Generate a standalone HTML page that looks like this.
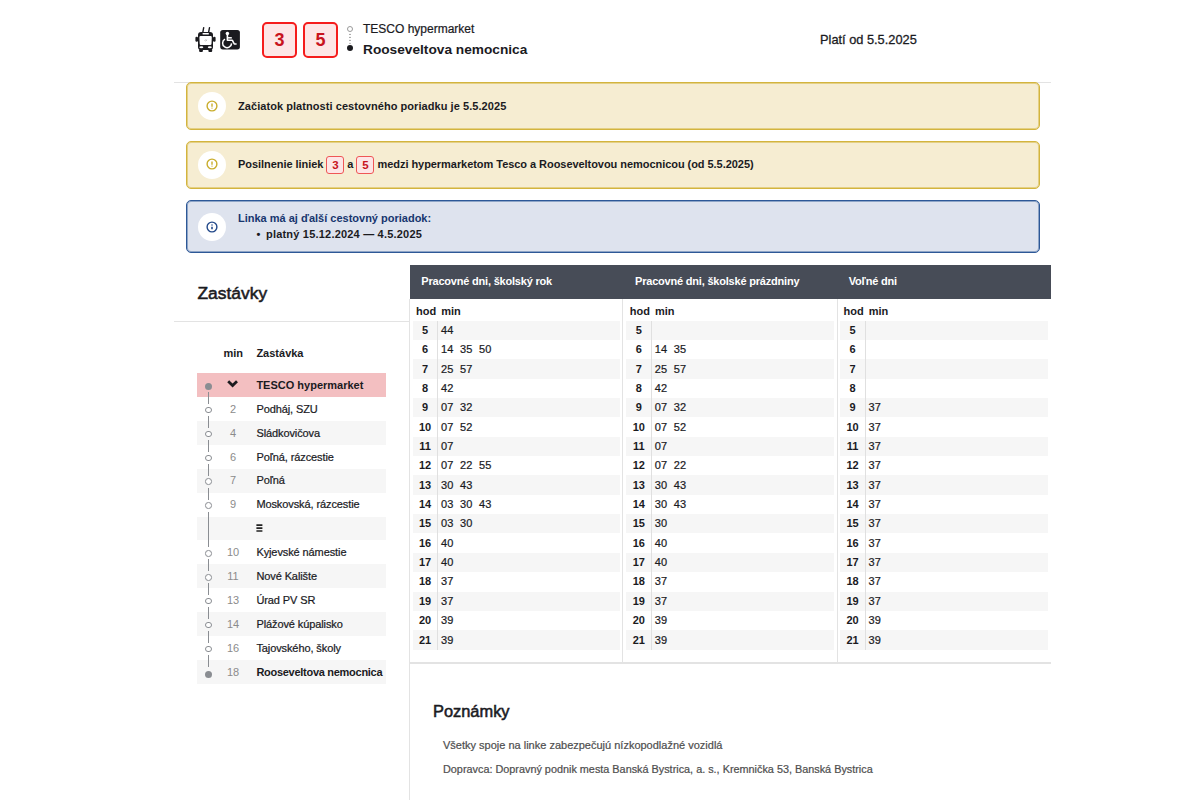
<!DOCTYPE html>
<html><head><meta charset="utf-8">
<style>
*{margin:0;padding:0;box-sizing:border-box}
html,body{width:1200px;height:800px;overflow:hidden;background:#fff}
body{position:relative;font-family:"Liberation Sans",sans-serif;color:#1b1b1f}
.a{position:absolute;white-space:nowrap;line-height:1}
.b{font-weight:bold}
.m{-webkit-text-stroke:0.22px currentColor}
.hl{position:absolute;background:#e3e3e3}
.badge{position:absolute;top:22px;width:35px;height:35.5px;border:2px solid #f51c1c;border-radius:5px;background:#fde6e6;color:#c8141e;font-weight:bold;font-size:18px;line-height:32.5px;text-align:center}
.note{position:absolute;left:186px;width:854px;border:1px solid #d3b43e;border-radius:5px;background:#f6edd2;box-shadow:inset 0 0 0 1px rgba(214,184,70,.55)}
.note.blue{border-color:#2d5897;background:#dee3ee;box-shadow:inset 0 0 0 1px rgba(45,88,151,.45)}
.circ{position:absolute;left:198px;width:28px;height:28px;border-radius:50%;background:#fff}
.ib{display:inline-block;width:18px;height:18px;border:1px solid #ef5656;border-radius:3px;background:#fde6e6;color:#c8141e;text-align:center;line-height:16px;vertical-align:top;margin-top:-2.6px;font-size:11.5px}
</style></head>
<body>
<!-- header icons -->
<svg class="a" style="left:192px;top:24px" width="28" height="30" viewBox="0 0 28 30">
  <path d="M11.7 3.6 L10.8 8.4 M17.5 3.6 L16.6 8.4" stroke="#1b1b1f" stroke-width="1.4" stroke-linecap="round"/>
  <rect x="6" y="8" width="15" height="18" rx="3" fill="#1b1b1f"/>
  <rect x="3.4" y="12.7" width="2.6" height="5" rx="1.2" fill="#1b1b1f"/>
  <rect x="21" y="12.7" width="2.6" height="5" rx="1.2" fill="#1b1b1f"/>
  <path d="M7.4 13.2 Q7.4 12 8.6 12 H18.6 Q19.8 12 19.8 13.2 L19.5 19.8 Q19.5 21 18.3 21 H8.9 Q7.7 21 7.7 19.8 Z" fill="#fff"/>
  <rect x="10.5" y="9.1" width="6.4" height="1.3" rx="0.4" fill="#fff"/>
  <ellipse cx="9.3" cy="23.2" rx="2" ry="1.05" fill="#fff"/>
  <ellipse cx="17.8" cy="23.2" rx="2" ry="1.05" fill="#fff"/>
  <rect x="7.1" y="25" width="3.8" height="3" rx="1" fill="#1b1b1f"/>
  <rect x="16.4" y="25" width="3.8" height="3" rx="1" fill="#1b1b1f"/>
  <path d="M12.5 17 L14.2 15.2 M13.6 17.3 L15.1 15.9" stroke="#9a9a9a" stroke-width="0.6"/>
</svg>
<svg class="a" style="left:220px;top:30px" width="20" height="20" viewBox="0 0 20 20">
  <rect x="0.2" y="0" width="19.7" height="19.4" rx="2.6" fill="#1b1b1f"/>
  <circle cx="7.4" cy="3.4" r="1.75" fill="#fff"/>
  <path d="M7.4 4.8 V10.3 H12.4 L14.3 14 H16.6" stroke="#fff" stroke-width="1.6" fill="none" stroke-linejoin="round"/>
  <path d="M7.4 7.8 H11.8" stroke="#fff" stroke-width="1.5"/>
  <path d="M5 9.2 A4.5 4.5 0 1 0 11.6 13.4" stroke="#fff" stroke-width="1.5" fill="none"/>
</svg>
<div class="badge" style="left:262px">3</div>
<div class="badge" style="left:303px">5</div>
<!-- route dots -->
<div class="a" style="left:347px;top:26px;width:6px;height:6px;border:1px solid #9a9a9a;border-radius:50%"></div>
<svg class="a" style="left:347px;top:32px" width="6" height="14" viewBox="0 0 6 14"><circle cx="3" cy="2.4" r="0.65" fill="#6f6f6f"/><circle cx="3" cy="5.4" r="0.65" fill="#6f6f6f"/><circle cx="3" cy="8.4" r="0.65" fill="#6f6f6f"/><circle cx="3" cy="11.4" r="0.65" fill="#8f8f8f"/></svg>
<div class="a" style="left:347px;top:45.2px;width:6px;height:6px;background:#1b1b1f;border-radius:50%"></div>
<div class="a m" style="left:363px;top:22.8px;font-size:12px">TESCO hypermarket</div>
<div class="a b" style="left:363px;top:42.7px;font-size:13.7px">Rooseveltova nemocnica</div>
<div class="a" style="left:820px;top:33.5px;font-size:12.8px;-webkit-text-stroke:0.3px #1b1b1f">Platí od 5.5.2025</div>
<div class="hl" style="left:174px;top:81.5px;width:877px;height:1.5px"></div>

<!-- notices -->
<div class="note" style="top:82px;height:48px"></div>
<div class="circ" style="top:92px"></div>
<svg class="a" style="left:206.4px;top:99.6px" width="12" height="12" viewBox="0 0 12 12"><circle cx="6" cy="6" r="4.9" stroke="#c9ad2c" stroke-width="1.4" fill="none"/><path d="M6 3.6 V6.7" stroke="#c9ad2c" stroke-width="1.4"/><circle cx="6" cy="8.1" r="0.7" fill="#c9ad2c"/></svg>
<div class="a b" style="left:238px;top:101.2px;font-size:11px;letter-spacing:0.06px">Začiatok platnosti cestovného poriadku je 5.5.2025</div>

<div class="note" style="top:141px;height:47.8px"></div>
<div class="circ" style="top:151px"></div>
<svg class="a" style="left:206.4px;top:158.4px" width="12" height="12" viewBox="0 0 12 12"><circle cx="6" cy="6" r="4.9" stroke="#c9ad2c" stroke-width="1.4" fill="none"/><path d="M6 3.6 V6.7" stroke="#c9ad2c" stroke-width="1.4"/><circle cx="6" cy="8.1" r="0.7" fill="#c9ad2c"/></svg>
<div class="a b" style="left:238px;top:158.5px;font-size:11px;letter-spacing:-0.05px">Posilnenie liniek <span class="ib">3</span> a <span class="ib">5</span> medzi hypermarketom Tesco a Rooseveltovou nemocnicou (od 5.5.2025)</div>

<div class="note blue" style="top:200px;height:52.8px"></div>
<div class="circ" style="top:212.5px"></div>
<svg class="a" style="left:206px;top:220.5px" width="12" height="12" viewBox="0 0 12 12"><circle cx="6" cy="6" r="4.9" stroke="#23498a" stroke-width="1.4" fill="none"/><circle cx="6" cy="4.1" r="0.75" fill="#23498a"/><path d="M6 5.7 V8.3" stroke="#23498a" stroke-width="1.6"/></svg>
<div class="a b" style="left:238px;top:213.2px;font-size:11px;color:#17366e">Linka má aj ďalší cestovný poriadok:</div>
<div class="a b" style="left:256.5px;top:229.4px;font-size:11px">•</div><div class="a b" style="left:266px;top:229.4px;font-size:11px;letter-spacing:0.2px">platný 15.12.2024 — 4.5.2025</div>

<!-- stops -->
<div class="a" style="left:197.5px;top:284.6px;font-size:17.4px;-webkit-text-stroke:0.55px #1b1b1f">Zastávky</div>
<div class="hl" style="left:174px;top:320.5px;width:236px;height:1.5px"></div>
<div class="a b" style="left:223.5px;top:347.5px;font-size:11px">min</div>
<div class="a b" style="left:256.4px;top:347.5px;font-size:11px">Zastávka</div>
<div class="a" style="left:197px;top:373.25px;width:189px;height:23.88px;background:#f3bfc1"></div>
<svg class="a" style="left:226px;top:379.19px" width="13" height="9" viewBox="0 0 13 9"><path d="M2.2 2.3 L6.6 6.5 L11 2.3" stroke="#1b1b1f" stroke-width="2.8" fill="none"/></svg>
<div class="a b" style="left:256.4px;top:379.95px;font-size:11px">TESCO hypermarket</div>
<div class="a" style="left:205px;top:382.69px;width:7px;height:7px;border-radius:50%;background:#8a8d92"></div>
<div class="a" style="left:197px;top:397.13px;width:189px;height:23.88px;background:#fff"></div>
<div class="a" style="left:220px;width:26px;text-align:center;top:403.83px;font-size:11px;color:#8b8b8b">2</div>
<div class="a m" style="left:256.4px;top:403.83px;font-size:11px;letter-spacing:-0.1px;">Podháj, SZU</div>
<div class="a" style="left:205.2px;top:406.77px;width:6.6px;height:6.6px;border-radius:50%;border:1.3px solid #8a8d92;background:#fff"></div>
<div class="a" style="left:197px;top:421.01px;width:189px;height:23.88px;background:#f6f6f6"></div>
<div class="a" style="left:220px;width:26px;text-align:center;top:427.71px;font-size:11px;color:#8b8b8b">4</div>
<div class="a m" style="left:256.4px;top:427.71px;font-size:11px;letter-spacing:-0.1px;">Sládkovičova</div>
<div class="a" style="left:205.2px;top:430.65px;width:6.6px;height:6.6px;border-radius:50%;border:1.3px solid #8a8d92;background:#fff"></div>
<div class="a" style="left:197px;top:444.89px;width:189px;height:23.88px;background:#fff"></div>
<div class="a" style="left:220px;width:26px;text-align:center;top:451.59px;font-size:11px;color:#8b8b8b">6</div>
<div class="a m" style="left:256.4px;top:451.59px;font-size:11px;letter-spacing:-0.1px;">Poľná, rázcestie</div>
<div class="a" style="left:205.2px;top:454.53px;width:6.6px;height:6.6px;border-radius:50%;border:1.3px solid #8a8d92;background:#fff"></div>
<div class="a" style="left:197px;top:468.77px;width:189px;height:23.88px;background:#f6f6f6"></div>
<div class="a" style="left:220px;width:26px;text-align:center;top:475.47px;font-size:11px;color:#8b8b8b">7</div>
<div class="a m" style="left:256.4px;top:475.47px;font-size:11px;letter-spacing:-0.1px;">Poľná</div>
<div class="a" style="left:205.2px;top:478.41px;width:6.6px;height:6.6px;border-radius:50%;border:1.3px solid #8a8d92;background:#fff"></div>
<div class="a" style="left:197px;top:492.65px;width:189px;height:23.88px;background:#fff"></div>
<div class="a" style="left:220px;width:26px;text-align:center;top:499.35px;font-size:11px;color:#8b8b8b">9</div>
<div class="a m" style="left:256.4px;top:499.35px;font-size:11px;letter-spacing:-0.1px;">Moskovská, rázcestie</div>
<div class="a" style="left:205.2px;top:502.29px;width:6.6px;height:6.6px;border-radius:50%;border:1.3px solid #8a8d92;background:#fff"></div>
<div class="a" style="left:197px;top:516.53px;width:189px;height:23.88px;background:#f6f6f6"></div>
<svg class="a" style="left:255px;top:522.73px" width="9" height="10" viewBox="0 0 9 10"><path d="M1.4 2.2 H7.4 M1.4 5.1 H7.4 M1.4 8 H7.4" stroke="#222" stroke-width="1.7"/></svg>
<div class="a" style="left:197px;top:540.41px;width:189px;height:23.88px;background:#fff"></div>
<div class="a" style="left:220px;width:26px;text-align:center;top:547.11px;font-size:11px;color:#8b8b8b">10</div>
<div class="a m" style="left:256.4px;top:547.11px;font-size:11px;letter-spacing:-0.1px;">Kyjevské námestie</div>
<div class="a" style="left:205.2px;top:550.05px;width:6.6px;height:6.6px;border-radius:50%;border:1.3px solid #8a8d92;background:#fff"></div>
<div class="a" style="left:197px;top:564.29px;width:189px;height:23.88px;background:#f6f6f6"></div>
<div class="a" style="left:220px;width:26px;text-align:center;top:570.99px;font-size:11px;color:#8b8b8b">11</div>
<div class="a m" style="left:256.4px;top:570.99px;font-size:11px;letter-spacing:-0.1px;">Nové Kalište</div>
<div class="a" style="left:205.2px;top:573.93px;width:6.6px;height:6.6px;border-radius:50%;border:1.3px solid #8a8d92;background:#fff"></div>
<div class="a" style="left:197px;top:588.17px;width:189px;height:23.88px;background:#fff"></div>
<div class="a" style="left:220px;width:26px;text-align:center;top:594.87px;font-size:11px;color:#8b8b8b">13</div>
<div class="a m" style="left:256.4px;top:594.87px;font-size:11px;letter-spacing:-0.1px;">Úrad PV SR</div>
<div class="a" style="left:205.2px;top:597.81px;width:6.6px;height:6.6px;border-radius:50%;border:1.3px solid #8a8d92;background:#fff"></div>
<div class="a" style="left:197px;top:612.05px;width:189px;height:23.88px;background:#f6f6f6"></div>
<div class="a" style="left:220px;width:26px;text-align:center;top:618.75px;font-size:11px;color:#8b8b8b">14</div>
<div class="a m" style="left:256.4px;top:618.75px;font-size:11px;letter-spacing:-0.1px;">Plážové kúpalisko</div>
<div class="a" style="left:205.2px;top:621.69px;width:6.6px;height:6.6px;border-radius:50%;border:1.3px solid #8a8d92;background:#fff"></div>
<div class="a" style="left:197px;top:635.93px;width:189px;height:23.88px;background:#fff"></div>
<div class="a" style="left:220px;width:26px;text-align:center;top:642.63px;font-size:11px;color:#8b8b8b">16</div>
<div class="a m" style="left:256.4px;top:642.63px;font-size:11px;letter-spacing:-0.1px;">Tajovského, školy</div>
<div class="a" style="left:205.2px;top:645.57px;width:6.6px;height:6.6px;border-radius:50%;border:1.3px solid #8a8d92;background:#fff"></div>
<div class="a" style="left:197px;top:659.81px;width:189px;height:23.88px;background:#f6f6f6"></div>
<div class="a" style="left:220px;width:26px;text-align:center;top:666.51px;font-size:11px;color:#8b8b8b">18</div>
<div class="a b" style="left:256.4px;top:666.51px;font-size:11px;letter-spacing:-0.28px;">Rooseveltova nemocnica</div>
<div class="a" style="left:205px;top:670.55px;width:7px;height:7px;border-radius:50%;background:#8a8d92"></div>
<div class="a" style="left:207.75px;top:392.19px;width:1.5px;height:11.88px;background:#8a8d92"></div>
<div class="a" style="left:207.75px;top:416.07px;width:1.5px;height:11.88px;background:#8a8d92"></div>
<div class="a" style="left:207.75px;top:439.95px;width:1.5px;height:11.88px;background:#8a8d92"></div>
<div class="a" style="left:207.75px;top:463.83px;width:1.5px;height:11.88px;background:#8a8d92"></div>
<div class="a" style="left:207.75px;top:487.71px;width:1.5px;height:11.88px;background:#8a8d92"></div>
<div class="a" style="left:207.75px;top:511.59px;width:1.5px;height:35.76px;background:#8a8d92"></div>
<div class="a" style="left:207.75px;top:559.35px;width:1.5px;height:11.88px;background:#8a8d92"></div>
<div class="a" style="left:207.75px;top:583.23px;width:1.5px;height:11.88px;background:#8a8d92"></div>
<div class="a" style="left:207.75px;top:607.11px;width:1.5px;height:11.88px;background:#8a8d92"></div>
<div class="a" style="left:207.75px;top:630.99px;width:1.5px;height:11.88px;background:#8a8d92"></div>
<div class="a" style="left:207.75px;top:654.87px;width:1.5px;height:11.88px;background:#8a8d92"></div>

<!-- table -->
<div class="a" style="left:409px;top:299px;width:1px;height:501px;background:#e3e3e3"></div>
<div class="a" style="left:409.75px;top:265px;width:641.25px;height:34px;background:#474c57"></div>
<div class="a b" style="left:421.25px;top:276.4px;font-size:11px;letter-spacing:-0.2px;color:#fff">Pracovné dni, školský rok</div>
<div class="a b" style="left:416.05px;top:305.7px;font-size:11px">hod</div>
<div class="a b" style="left:441.25px;top:305.7px;font-size:11px">min</div>
<div class="a" style="left:412.50px;top:320.60px;width:207.75px;height:19.35px;background:#f6f6f6"></div>
<div class="a b" style="left:412.50px;width:25px;text-align:center;top:324.90px;font-size:11px">5</div>
<div class="a m" style="left:441.05px;top:324.90px;font-size:11px">44</div>
<div class="a b" style="left:412.50px;width:25px;text-align:center;top:344.25px;font-size:11px">6</div>
<div class="a m" style="left:441.05px;top:344.25px;font-size:11px">14</div>
<div class="a m" style="left:460.05px;top:344.25px;font-size:11px">35</div>
<div class="a m" style="left:479.05px;top:344.25px;font-size:11px">50</div>
<div class="a" style="left:412.50px;top:359.30px;width:207.75px;height:19.35px;background:#f6f6f6"></div>
<div class="a b" style="left:412.50px;width:25px;text-align:center;top:363.60px;font-size:11px">7</div>
<div class="a m" style="left:441.05px;top:363.60px;font-size:11px">25</div>
<div class="a m" style="left:460.05px;top:363.60px;font-size:11px">57</div>
<div class="a b" style="left:412.50px;width:25px;text-align:center;top:382.95px;font-size:11px">8</div>
<div class="a m" style="left:441.05px;top:382.95px;font-size:11px">42</div>
<div class="a" style="left:412.50px;top:398.00px;width:207.75px;height:19.35px;background:#f6f6f6"></div>
<div class="a b" style="left:412.50px;width:25px;text-align:center;top:402.30px;font-size:11px">9</div>
<div class="a m" style="left:441.05px;top:402.30px;font-size:11px">07</div>
<div class="a m" style="left:460.05px;top:402.30px;font-size:11px">32</div>
<div class="a b" style="left:412.50px;width:25px;text-align:center;top:421.65px;font-size:11px">10</div>
<div class="a m" style="left:441.05px;top:421.65px;font-size:11px">07</div>
<div class="a m" style="left:460.05px;top:421.65px;font-size:11px">52</div>
<div class="a" style="left:412.50px;top:436.70px;width:207.75px;height:19.35px;background:#f6f6f6"></div>
<div class="a b" style="left:412.50px;width:25px;text-align:center;top:441.00px;font-size:11px">11</div>
<div class="a m" style="left:441.05px;top:441.00px;font-size:11px">07</div>
<div class="a b" style="left:412.50px;width:25px;text-align:center;top:460.35px;font-size:11px">12</div>
<div class="a m" style="left:441.05px;top:460.35px;font-size:11px">07</div>
<div class="a m" style="left:460.05px;top:460.35px;font-size:11px">22</div>
<div class="a m" style="left:479.05px;top:460.35px;font-size:11px">55</div>
<div class="a" style="left:412.50px;top:475.40px;width:207.75px;height:19.35px;background:#f6f6f6"></div>
<div class="a b" style="left:412.50px;width:25px;text-align:center;top:479.70px;font-size:11px">13</div>
<div class="a m" style="left:441.05px;top:479.70px;font-size:11px">30</div>
<div class="a m" style="left:460.05px;top:479.70px;font-size:11px">43</div>
<div class="a b" style="left:412.50px;width:25px;text-align:center;top:499.05px;font-size:11px">14</div>
<div class="a m" style="left:441.05px;top:499.05px;font-size:11px">03</div>
<div class="a m" style="left:460.05px;top:499.05px;font-size:11px">30</div>
<div class="a m" style="left:479.05px;top:499.05px;font-size:11px">43</div>
<div class="a" style="left:412.50px;top:514.10px;width:207.75px;height:19.35px;background:#f6f6f6"></div>
<div class="a b" style="left:412.50px;width:25px;text-align:center;top:518.40px;font-size:11px">15</div>
<div class="a m" style="left:441.05px;top:518.40px;font-size:11px">03</div>
<div class="a m" style="left:460.05px;top:518.40px;font-size:11px">30</div>
<div class="a b" style="left:412.50px;width:25px;text-align:center;top:537.75px;font-size:11px">16</div>
<div class="a m" style="left:441.05px;top:537.75px;font-size:11px">40</div>
<div class="a" style="left:412.50px;top:552.80px;width:207.75px;height:19.35px;background:#f6f6f6"></div>
<div class="a b" style="left:412.50px;width:25px;text-align:center;top:557.10px;font-size:11px">17</div>
<div class="a m" style="left:441.05px;top:557.10px;font-size:11px">40</div>
<div class="a b" style="left:412.50px;width:25px;text-align:center;top:576.45px;font-size:11px">18</div>
<div class="a m" style="left:441.05px;top:576.45px;font-size:11px">37</div>
<div class="a" style="left:412.50px;top:591.50px;width:207.75px;height:19.35px;background:#f6f6f6"></div>
<div class="a b" style="left:412.50px;width:25px;text-align:center;top:595.80px;font-size:11px">19</div>
<div class="a m" style="left:441.05px;top:595.80px;font-size:11px">37</div>
<div class="a b" style="left:412.50px;width:25px;text-align:center;top:615.15px;font-size:11px">20</div>
<div class="a m" style="left:441.05px;top:615.15px;font-size:11px">39</div>
<div class="a" style="left:412.50px;top:630.20px;width:207.75px;height:19.35px;background:#f6f6f6"></div>
<div class="a b" style="left:412.50px;width:25px;text-align:center;top:634.50px;font-size:11px">21</div>
<div class="a m" style="left:441.05px;top:634.50px;font-size:11px">39</div>
<div class="a" style="left:437.05px;top:320.60px;width:1px;height:328.95px;background:#e0e0e0"></div>
<div class="a b" style="left:635.00px;top:276.4px;font-size:11px;letter-spacing:-0.2px;color:#fff">Pracovné dni, školské prázdniny</div>
<div class="a" style="left:622px;top:299px;width:1px;height:363px;background:#e3e3e3"></div>
<div class="a b" style="left:629.80px;top:305.7px;font-size:11px">hod</div>
<div class="a b" style="left:655.00px;top:305.7px;font-size:11px">min</div>
<div class="a" style="left:626.25px;top:320.60px;width:207.75px;height:19.35px;background:#f6f6f6"></div>
<div class="a b" style="left:626.25px;width:25px;text-align:center;top:324.90px;font-size:11px">5</div>
<div class="a b" style="left:626.25px;width:25px;text-align:center;top:344.25px;font-size:11px">6</div>
<div class="a m" style="left:654.80px;top:344.25px;font-size:11px">14</div>
<div class="a m" style="left:673.80px;top:344.25px;font-size:11px">35</div>
<div class="a" style="left:626.25px;top:359.30px;width:207.75px;height:19.35px;background:#f6f6f6"></div>
<div class="a b" style="left:626.25px;width:25px;text-align:center;top:363.60px;font-size:11px">7</div>
<div class="a m" style="left:654.80px;top:363.60px;font-size:11px">25</div>
<div class="a m" style="left:673.80px;top:363.60px;font-size:11px">57</div>
<div class="a b" style="left:626.25px;width:25px;text-align:center;top:382.95px;font-size:11px">8</div>
<div class="a m" style="left:654.80px;top:382.95px;font-size:11px">42</div>
<div class="a" style="left:626.25px;top:398.00px;width:207.75px;height:19.35px;background:#f6f6f6"></div>
<div class="a b" style="left:626.25px;width:25px;text-align:center;top:402.30px;font-size:11px">9</div>
<div class="a m" style="left:654.80px;top:402.30px;font-size:11px">07</div>
<div class="a m" style="left:673.80px;top:402.30px;font-size:11px">32</div>
<div class="a b" style="left:626.25px;width:25px;text-align:center;top:421.65px;font-size:11px">10</div>
<div class="a m" style="left:654.80px;top:421.65px;font-size:11px">07</div>
<div class="a m" style="left:673.80px;top:421.65px;font-size:11px">52</div>
<div class="a" style="left:626.25px;top:436.70px;width:207.75px;height:19.35px;background:#f6f6f6"></div>
<div class="a b" style="left:626.25px;width:25px;text-align:center;top:441.00px;font-size:11px">11</div>
<div class="a m" style="left:654.80px;top:441.00px;font-size:11px">07</div>
<div class="a b" style="left:626.25px;width:25px;text-align:center;top:460.35px;font-size:11px">12</div>
<div class="a m" style="left:654.80px;top:460.35px;font-size:11px">07</div>
<div class="a m" style="left:673.80px;top:460.35px;font-size:11px">22</div>
<div class="a" style="left:626.25px;top:475.40px;width:207.75px;height:19.35px;background:#f6f6f6"></div>
<div class="a b" style="left:626.25px;width:25px;text-align:center;top:479.70px;font-size:11px">13</div>
<div class="a m" style="left:654.80px;top:479.70px;font-size:11px">30</div>
<div class="a m" style="left:673.80px;top:479.70px;font-size:11px">43</div>
<div class="a b" style="left:626.25px;width:25px;text-align:center;top:499.05px;font-size:11px">14</div>
<div class="a m" style="left:654.80px;top:499.05px;font-size:11px">30</div>
<div class="a m" style="left:673.80px;top:499.05px;font-size:11px">43</div>
<div class="a" style="left:626.25px;top:514.10px;width:207.75px;height:19.35px;background:#f6f6f6"></div>
<div class="a b" style="left:626.25px;width:25px;text-align:center;top:518.40px;font-size:11px">15</div>
<div class="a m" style="left:654.80px;top:518.40px;font-size:11px">30</div>
<div class="a b" style="left:626.25px;width:25px;text-align:center;top:537.75px;font-size:11px">16</div>
<div class="a m" style="left:654.80px;top:537.75px;font-size:11px">40</div>
<div class="a" style="left:626.25px;top:552.80px;width:207.75px;height:19.35px;background:#f6f6f6"></div>
<div class="a b" style="left:626.25px;width:25px;text-align:center;top:557.10px;font-size:11px">17</div>
<div class="a m" style="left:654.80px;top:557.10px;font-size:11px">40</div>
<div class="a b" style="left:626.25px;width:25px;text-align:center;top:576.45px;font-size:11px">18</div>
<div class="a m" style="left:654.80px;top:576.45px;font-size:11px">37</div>
<div class="a" style="left:626.25px;top:591.50px;width:207.75px;height:19.35px;background:#f6f6f6"></div>
<div class="a b" style="left:626.25px;width:25px;text-align:center;top:595.80px;font-size:11px">19</div>
<div class="a m" style="left:654.80px;top:595.80px;font-size:11px">37</div>
<div class="a b" style="left:626.25px;width:25px;text-align:center;top:615.15px;font-size:11px">20</div>
<div class="a m" style="left:654.80px;top:615.15px;font-size:11px">39</div>
<div class="a" style="left:626.25px;top:630.20px;width:207.75px;height:19.35px;background:#f6f6f6"></div>
<div class="a b" style="left:626.25px;width:25px;text-align:center;top:634.50px;font-size:11px">21</div>
<div class="a m" style="left:654.80px;top:634.50px;font-size:11px">39</div>
<div class="a" style="left:650.80px;top:320.60px;width:1px;height:328.95px;background:#e0e0e0"></div>
<div class="a b" style="left:848.75px;top:276.4px;font-size:11px;letter-spacing:-0.2px;color:#fff">Voľné dni</div>
<div class="a" style="left:837px;top:299px;width:1px;height:363px;background:#e3e3e3"></div>
<div class="a b" style="left:843.55px;top:305.7px;font-size:11px">hod</div>
<div class="a b" style="left:868.75px;top:305.7px;font-size:11px">min</div>
<div class="a" style="left:840.00px;top:320.60px;width:207.75px;height:19.35px;background:#f6f6f6"></div>
<div class="a b" style="left:840.00px;width:25px;text-align:center;top:324.90px;font-size:11px">5</div>
<div class="a b" style="left:840.00px;width:25px;text-align:center;top:344.25px;font-size:11px">6</div>
<div class="a" style="left:840.00px;top:359.30px;width:207.75px;height:19.35px;background:#f6f6f6"></div>
<div class="a b" style="left:840.00px;width:25px;text-align:center;top:363.60px;font-size:11px">7</div>
<div class="a b" style="left:840.00px;width:25px;text-align:center;top:382.95px;font-size:11px">8</div>
<div class="a" style="left:840.00px;top:398.00px;width:207.75px;height:19.35px;background:#f6f6f6"></div>
<div class="a b" style="left:840.00px;width:25px;text-align:center;top:402.30px;font-size:11px">9</div>
<div class="a m" style="left:868.55px;top:402.30px;font-size:11px">37</div>
<div class="a b" style="left:840.00px;width:25px;text-align:center;top:421.65px;font-size:11px">10</div>
<div class="a m" style="left:868.55px;top:421.65px;font-size:11px">37</div>
<div class="a" style="left:840.00px;top:436.70px;width:207.75px;height:19.35px;background:#f6f6f6"></div>
<div class="a b" style="left:840.00px;width:25px;text-align:center;top:441.00px;font-size:11px">11</div>
<div class="a m" style="left:868.55px;top:441.00px;font-size:11px">37</div>
<div class="a b" style="left:840.00px;width:25px;text-align:center;top:460.35px;font-size:11px">12</div>
<div class="a m" style="left:868.55px;top:460.35px;font-size:11px">37</div>
<div class="a" style="left:840.00px;top:475.40px;width:207.75px;height:19.35px;background:#f6f6f6"></div>
<div class="a b" style="left:840.00px;width:25px;text-align:center;top:479.70px;font-size:11px">13</div>
<div class="a m" style="left:868.55px;top:479.70px;font-size:11px">37</div>
<div class="a b" style="left:840.00px;width:25px;text-align:center;top:499.05px;font-size:11px">14</div>
<div class="a m" style="left:868.55px;top:499.05px;font-size:11px">37</div>
<div class="a" style="left:840.00px;top:514.10px;width:207.75px;height:19.35px;background:#f6f6f6"></div>
<div class="a b" style="left:840.00px;width:25px;text-align:center;top:518.40px;font-size:11px">15</div>
<div class="a m" style="left:868.55px;top:518.40px;font-size:11px">37</div>
<div class="a b" style="left:840.00px;width:25px;text-align:center;top:537.75px;font-size:11px">16</div>
<div class="a m" style="left:868.55px;top:537.75px;font-size:11px">37</div>
<div class="a" style="left:840.00px;top:552.80px;width:207.75px;height:19.35px;background:#f6f6f6"></div>
<div class="a b" style="left:840.00px;width:25px;text-align:center;top:557.10px;font-size:11px">17</div>
<div class="a m" style="left:868.55px;top:557.10px;font-size:11px">37</div>
<div class="a b" style="left:840.00px;width:25px;text-align:center;top:576.45px;font-size:11px">18</div>
<div class="a m" style="left:868.55px;top:576.45px;font-size:11px">37</div>
<div class="a" style="left:840.00px;top:591.50px;width:207.75px;height:19.35px;background:#f6f6f6"></div>
<div class="a b" style="left:840.00px;width:25px;text-align:center;top:595.80px;font-size:11px">19</div>
<div class="a m" style="left:868.55px;top:595.80px;font-size:11px">37</div>
<div class="a b" style="left:840.00px;width:25px;text-align:center;top:615.15px;font-size:11px">20</div>
<div class="a m" style="left:868.55px;top:615.15px;font-size:11px">39</div>
<div class="a" style="left:840.00px;top:630.20px;width:207.75px;height:19.35px;background:#f6f6f6"></div>
<div class="a b" style="left:840.00px;width:25px;text-align:center;top:634.50px;font-size:11px">21</div>
<div class="a m" style="left:868.55px;top:634.50px;font-size:11px">39</div>
<div class="a" style="left:864.55px;top:320.60px;width:1px;height:328.95px;background:#e0e0e0"></div>
<div class="hl" style="left:409.75px;top:662px;width:641.25px;height:1.5px"></div>

<!-- notes -->
<div class="a" style="left:433px;top:703.3px;font-size:16.4px;-webkit-text-stroke:0.55px #1b1b1f">Poznámky</div>
<div class="a m" style="left:443px;top:739.7px;font-size:11px;color:#4f4f4f">Všetky spoje na linke zabezpečujú nízkopodlažné vozidlá</div>
<div class="a m" style="left:443px;top:763.5px;font-size:10.85px;color:#4f4f4f">Dopravca: Dopravný podnik mesta Banská Bystrica, a. s., Kremnička 53, Banská Bystrica</div>
</body></html>
